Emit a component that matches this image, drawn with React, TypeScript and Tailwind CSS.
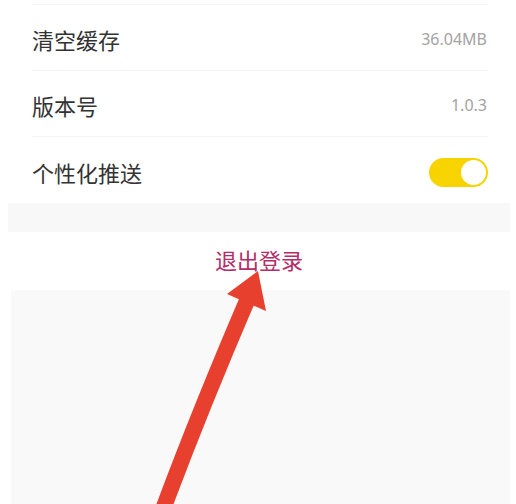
import React from 'react';

type Row = {
  label: string;
  value?: string;
  toggle?: boolean;
};

const rows: Row[] = [
  { label: '清空缓存', value: '36.04MB' },
  { label: '版本号', value: '1.0.3' },
  { label: '个性化推送', toggle: true },
];

const cjk = { fontFamily: '"Noto Sans CJK SC", "Noto Sans", sans-serif' };

function Toggle() {
  return (
    <div className="w-[59px] h-[29px] rounded-full bg-[#f7d300] flex items-center justify-end pr-[2px] mt-[2px]">
      <div className="w-[25px] h-[25px] rounded-full bg-white" />
    </div>
  );
}

export default function App() {
  return (
    <div className="relative w-[516px] h-[504px] bg-white overflow-hidden" style={cjk}>
      <div className="ml-[32px] mr-[28px] border-t border-[#f5f5f5] mt-[4px]">
        {rows.map((row, idx) => (
          <div
            key={row.label}
            className={`h-[66px] flex items-center justify-between pt-[3px] ${
              idx < rows.length - 1 ? 'border-b border-[#f3f3f3]' : ''
            }`}
          >
            <span className="text-[22px] leading-none text-[#333333]">{row.label}</span>
            {row.toggle ? (
              <Toggle />
            ) : (
              <span
                className="text-[16px] leading-none text-[#a3a3a3] pr-[1px]"
                style={{ fontFamily: '"Noto Sans", Roboto, sans-serif' }}
              >
                {row.value}
              </span>
            )}
          </div>
        ))}
      </div>

      <div className="ml-[8px] mr-[6px] h-[29px] bg-[#f8f8f8]" />

      <div className="h-[58px] flex items-center justify-center pl-[2px]">
        <span className="text-[22px] leading-none text-[#b52c66] pb-[4px]">退出登录</span>
      </div>

      <div className="ml-[11px] mr-[6px] h-[220px] bg-[#f9f9f9]" />

      {/* annotation arrow */}
      <svg className="absolute left-0 top-0 pointer-events-none" width="516" height="504" viewBox="0 0 516 504">
        <path d="M162 512 Q200 410 249 296" stroke="#e8402e" strokeWidth="16" fill="none" />
        <polygon points="258,271 227,294 266,311" fill="#e8402e" />
      </svg>
    </div>
  );
}
